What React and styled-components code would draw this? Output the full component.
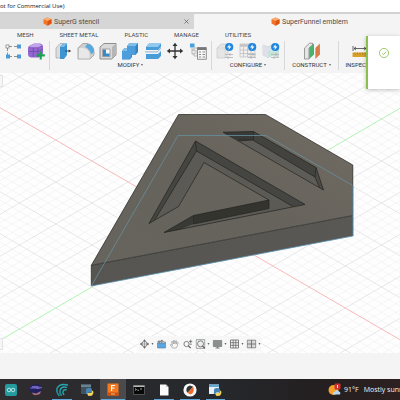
import React from "react";
import styled, { createGlobalStyle } from "styled-components";

const GlobalStyle = createGlobalStyle`
  * { box-sizing: border-box; }
  body { margin: 0; background: #f4f4f5; font-family: Roboto, "Liberation Sans", sans-serif; }
  button { border: 0; padding: 0; margin: 0; background: none; font: inherit; color: inherit; }
`;

const Page = styled.div`
  min-height: 100vh;
  display: flex;
  flex-direction: column;
  overflow: hidden;
  position: relative;
`;

const TitleBar = styled.header`
  height: 12px;
  background: #fff;
  color: #111;
  font: 6px/13px "Open Sans", "Noto Sans", sans-serif;
  white-space: nowrap;
`;

const Tabs = styled.nav`
  display: flex;
  height: 17px;
  background: #f4f4f5;
  border-top: 2px solid #d2d2d2;
`;

const Tab = styled.div`
  flex: 0 0 ${(p) => (p.$active ? "51.5%" : "48.5%")};
  display: flex;
  align-items: center;
  justify-content: space-between;
  padding: 0 4px 0 ${(p) => (p.$active ? "77px" : "43px")};
  background: ${(p) => (p.$active ? "#f4f4f5" : "#d6d6d6")};
`;

const TabButton = styled.button`
  display: flex;
  align-items: center;
  gap: 2px;
  font-size: 7px;
  line-height: 10px;
  color: #4a4a4a;
  white-space: nowrap;
`;

const CloseButton = styled.button`
  display: flex;
`;

const MenuBar = styled.nav`
  display: flex;
  gap: 26px;
  height: 12px;
  padding-left: 17px;
  background: #f4f4f5;
`;

const MenuItem = styled.button`
  font-size: 6px;
  line-height: 12px;
  color: #444;
  white-space: nowrap;
`;

const Ribbon = styled.div`
  display: flex;
  height: 32px;
  padding-bottom: 3px;
  background: #f4f4f5;
  overflow: hidden;
`;

const Group = styled.section`
  flex: 0 0 ${(p) => p.$width}px;
  display: flex;
  flex-direction: column;
  align-items: stretch;
  padding: 0 2px;
  border-right: 1px solid #d8d8d8;
`;

const Tools = styled.div`
  display: flex;
  height: 20px;
`;

const Tool = styled.button`
  flex: 1;
  display: flex;
  align-items: center;
  justify-content: center;
`;

const GroupLabel = styled.button`
  font-size: 6px;
  line-height: 10px;
  color: #333;
  text-align: center;
  white-space: nowrap;
`;

const Caret = styled.span`
  display: inline-block;
  margin-left: ${(p) => p.$gap || 0}px;
  vertical-align: middle;
  border: 1px solid transparent;
  border-top: 2px solid #666;
  border-bottom: 0;
`;

const Viewport = styled.main`
  flex: 1 0 280px;
  position: relative;
  background: #fefefe;
  overflow: hidden;
`;

const Scene = styled.svg`
  position: absolute;
  inset: 0;
  width: 100%;
  height: 100%;
`;

const PanelEdge = styled.div`
  position: absolute;
  left: 0;
  ${(p) => (p.$low ? "bottom: 3px;" : "top: 2px;")}
  width: 3px;
  height: 12px;
  background: #f6f6f6;
  border: 1px solid #e4e4e4;
  border-left: 0;
`;

const NavBar = styled.div`
  position: absolute;
  left: 50%;
  bottom: 2px;
  transform: translateX(-50%);
  display: flex;
  align-items: center;
  gap: 3px;
  height: 15px;
  padding: 0 1px;
  background: #f7f7f7;
`;

const NavButton = styled.button`
  display: flex;
  align-items: center;
  gap: 2px;
`;

const StatusArea = styled.footer`
  height: 26px;
  background: #f4f4f5;
`;

const Taskbar = styled.footer`
  display: flex;
  height: 21px;
  background: linear-gradient(90deg, #302c2f 0%, #2a2a2d 25%, #25282c 55%, #241f20 80%, #2d2020 100%);
  overflow: hidden;
`;

const Apps = styled.div`
  flex: 0 0 230px;
  display: flex;
  margin-left: -2px;
`;

const AppButton = styled.button`
  flex: 1;
  display: flex;
  align-items: center;
  justify-content: center;
  background: ${(p) => (p.$active ? "#4b4a4d" : "transparent")};
  position: relative;

  &::after {
    content: "";
    position: absolute;
    left: ${(p) => (p.$active ? 1 : 3)}px;
    right: ${(p) => (p.$active ? 1 : 3)}px;
    bottom: 0;
    height: 1px;
    background: ${(p) => (p.$running ? "#5fa8dc" : "transparent")};
  }
`;

const Weather = styled.button`
  display: flex;
  align-items: center;
  gap: 3px;
  margin-left: 100px;
  color: #f2f2f2;
  font: 7px/20px "Open Sans", "Noto Sans", sans-serif;
  white-space: nowrap;
`;

const Summary = styled.span`
  margin-left: 2px;
`;

const Toast = styled.aside`
  position: absolute;
  top: 36px;
  right: 0;
  width: 34px;
  height: 53px;
  padding: 8px 0 0 10px;
  background: #fff;
  border-left: 2px solid #8bc051;
  box-shadow: 0 1px 4px rgba(0, 0, 0, 0.25);
`;

/* ---------- icons ---------- */

const Svg = ({ w = 18, h = w, box = `0 0 ${w} ${h}`, children }) => (
  <svg width={w} height={h} viewBox={box} fill="none" aria-hidden="true">{children}</svg>
);

const CubeIcon = () => (
  <Svg w={9}>
    <path d="M4.5 .4 8.5 2.2V6.6L4.5 8.8.5 6.6V2.2Z" fill="#f2742a" />
    <path d="M4.5 .4 8.5 2.2 4.7 3.9.5 2.2Z" fill="#ffab6b" />
    <path d="M4.7 3.9 8.5 2.2V6.6L4.5 8.8Z" fill="#dc5410" />
  </Svg>
);

const PatternIcon = () => (
  <Svg w={18}>
    <path d="M5 4.5H8M10 4.5H13M3.5 6V9M3.5 10.5V13M5 14.5H8M10 14.5H13" stroke="#777" strokeWidth=".8" />
    <rect x="2" y="3" width="3" height="3" fill="#fff" stroke="#777" strokeWidth=".7" />
    <path d="M13 2.5h4v4h-4zM2 12.5h4v4H2zM13 12.5h4v4h-4z" fill="#4b9bd8" />
  </Svg>
);

const FormIcon = () => (
  <Svg w={18}>
    <path d="M1 6Q1 4 4 3L7 1.5H13Q16 2 16 5V11Q15 15 11 15.5H4Q1 15 1 12Z" fill="#9367cf" />
    <path d="M2 5 6 2H13L15 4 11 6H4Z" fill="#c2a2ee" />
    <path d="M1.5 9.5H11L16 7M6.3 6V15M11 6V15.5M2 5.6H11L15.5 4" stroke="#6541a5" strokeWidth=".6" />
    <path d="M13.7 9.2V17.5M9.5 13.4H17.8" stroke="#16a34c" strokeWidth="2.1" />
  </Svg>
);

const PressIcon = () => (
  <Svg w={18}>
    <path d="M2 6 6 1.5H9V16H2Z" fill="#ddd" stroke="#999" strokeWidth=".6" />
    <path d="M6 5 9 1.5H13V13L10 17H6Z" fill="#3d94d1" />
    <path d="M6 5 9 1.5H13L10 5Z" fill="#7bbce8" />
    <path d="M11 9H15" stroke="#333" strokeWidth=".8" />
    <path d="M14.6 7.4 17.2 9 14.6 10.6Z" fill="#333" />
  </Svg>
);

const FilletIcon = () => (
  <Svg w={18}>
    <path d="M1 6 6 1.5H10Q17 3 17 10V13L13 17H1Z" fill="#cfcfcf" stroke="#8c8c8c" strokeWidth=".7" />
    <path d="M2 6H6Q12 7 12.5 12V16.5H1.7Z" fill="#e8e8e8" />
    <path d="M8 5 10.5 1.7Q17 3 17 10L14 12.5Q13 7 8 5Z" fill="#58a9df" />
  </Svg>
);

const ShellIcon = () => (
  <Svg w={18}>
    <path d="M1 5 5 1.5H17V13L13 17H1Z" fill="#dadada" stroke="#777" strokeWidth=".8" />
    <path d="M13 5 17 1.5V13L13 17Z" fill="#b5b5b5" />
    <path d="M3.5 7H11V14.5H3.5Z" fill="#f9f9f9" stroke="#777" strokeWidth=".6" />
    <path d="M4 7.4 7 7.4V11.5H10.6V14.2H4Z" fill="#3889c7" />
  </Svg>
);

const CombineIcon = () => (
  <Svg w={18}>
    <path d="M6 4 8.5 1H17V10L14.5 13H11V15L9 17.5H1V9L3.5 6H6Z" fill="#3184c2" />
    <path d="M6 4 8.5 1H17L14.5 4ZM1 9 3.5 6H6V9Z" fill="#83bee9" />
    <path d="M6 4H14.5V13H10V17H1V9H6Z" fill="#4b9edb" />
  </Svg>
);

const SplitIcon = () => (
  <Svg w={18}>
    <path d="M2 5 5 1.5H17V5L14 8H2ZM2 12H14L17 9V14L14 17H2Z" fill="#489cd8" />
    <path d="M2 5 5 1.5H17L14 5Z" fill="#91c8ed" />
    <path d="M1 10.5H13.5L17.3 6.6" stroke="#d4edff" strokeWidth="1.6" />
    <path d="M1 9.8H13.2L17 6" stroke="#6a8090" strokeWidth=".5" />
  </Svg>
);

const MoveIcon = () => (
  <Svg w={18}>
    <path d="M9 3V15M3 9H15" stroke="#333" strokeWidth="1.3" />
    <path d="M9 .8 11.5 4H6.5ZM9 17.2 6.5 14H11.5ZM.8 9 4 6.5V11.5ZM17.2 9 14 11.5V6.5Z" fill="#333" />
  </Svg>
);

const ParamsIcon = () => (
  <Svg w={18}>
    <path d="M1 1.5h4.5v4H1z" fill="#4b9edb" />
    <path d="M3 6V12H7M3 8H6" stroke="#999" strokeWidth=".7" />
    <path d="M5 6H9V9H5ZM5 11H9V14H5Z" fill="#eee" stroke="#999" strokeWidth=".6" />
    <path d="M8.5 5.5H17.3V17.3H8.5Z" fill="#f5f5f5" stroke="#777" strokeWidth=".8" />
    <path d="M8.5 5.5h8.8V8H8.5z" fill="#777" />
    <path d="M10 10H12M10 12.5H12M10 15H12M13.5 10H16M13.5 12.5H16M13.5 15H16" stroke="#777" strokeWidth=".8" />
  </Svg>
);

const Bolt = () => (
  <g>
    <circle cx="13.2" cy="5" r="4.1" fill="#1f86df" />
    <path d="M13.6 2.2 11 5.5H13L12.4 8 15.5 4.6H13.5Z" fill="#fff" />
  </g>
);

const Sliders = () => (
  <path d="M9 12.5H17M9 15.5H17M14 11V14M12 14V17" stroke="#aeb3b5" strokeWidth=".8" />
);

const ConfigIcon = () => (
  <Svg w={18}>
    <path d="M1 6 5 2H12V12L9 16H1Z" fill="#e5e5e5" stroke="#c4c4c4" strokeWidth=".6" />
    <path d="M1 6H9V16" stroke="#ccc" strokeWidth=".5" />
    <Sliders /><Bolt />
  </Svg>
);

const TableIcon = () => (
  <Svg w={18}>
    <path d="M1 2H16V15H1Z" fill="#f0f0f0" stroke="#bbb" strokeWidth=".7" />
    <path d="M1 3.5H16" stroke="#c2c2c2" strokeWidth="2.5" />
    <path d="M1 8H16M1 11.5H16M4.5 5V15M8.5 5V15M12 5V15" stroke="#b7b7b7" strokeWidth=".7" />
    <Sliders /><Bolt />
  </Svg>
);

const MapIcon = () => (
  <Svg w={18}>
    <path d="M1 3 6 5 12 2 16.5 4V15L11 13 6 15.5 1 13Z" fill="#d2e5ea" stroke="#bcc8cb" strokeWidth=".6" />
    <path d="M1 3 6 5V15.5L1 13Z" fill="#e4ddeb" />
    <path d="M6 8Q9 12 16.5 8V15L11 13 6 15.5Z" fill="#c4e6d9" />
    <Sliders /><Bolt />
  </Svg>
);

const ConstructIcon = () => (
  <Svg w={18}>
    <path d="M1.5 6 6.5 1.2H9.5V3L6 6V17H1.5Z" fill="#e6e6e6" stroke="#666" strokeWidth=".6" />
    <path d="M6.2 6 11 1.5V12.5L6.2 17Z" fill="#47b36d" />
    <path d="M12.4 6 16.9 1.5V12.5L12.4 17Z" fill="#d87b49" />
  </Svg>
);

const MeasureIcon = () => (
  <Svg w={18}>
    <path d="M2 4V9M16 4V9M3 6.5H15M5 5 3 6.5 5 8M13 5 15 6.5 13 8" stroke="#444" strokeWidth=".8" />
    <path d="M1.5 10.5h15v4.5h-15z" fill="#d8a12b" />
    <path d="M4 10.5v2M6.5 10.5v2M9 10.5v2M11.5 10.5v2M14 10.5v2" stroke="#886016" strokeWidth=".5" />
  </Svg>
);

const ribbonGroups = [
  { label: "", width: 50, tools: [["Pattern", PatternIcon], ["Create form", FormIcon]] },
  {
    label: "MODIFY", width: 162,
    tools: [["Press pull", PressIcon], ["Fillet", FilletIcon], ["Shell", ShellIcon], ["Combine", CombineIcon],
      ["Split body", SplitIcon], ["Move", MoveIcon], ["Change parameters", ParamsIcon]],
  },
  { label: "CONFIGURE", width: 73, tools: [["Configure", ConfigIcon], ["Configuration table", TableIcon], ["Theme", MapIcon]] },
  { label: "CONSTRUCT", width: 54, tools: [["Offset plane", ConstructIcon]] },
  { label: "INSPECT", width: 42, tools: [["Measure", MeasureIcon]] },
];

const navTools = [
  ["Orbit", true, <><path d="M5 1V9M1 5H9" stroke="#666" strokeWidth=".5" /><path d="M5 .3 6.5 2.3H3.5ZM5 9.7 3.5 7.7H6.5ZM.3 5 2.3 3.5V6.5ZM9.7 5 7.7 6.5V3.5Z" fill="#666" /><circle cx="5" cy="5" r="2.6" stroke="#666" strokeWidth=".8" /></>],
  ["Look at", false, <><path d="M1 4H9V9H1Z" fill="#5ba6df" stroke="#507da2" strokeWidth=".6" /><path d="M1.5 4V2H5V1L7 2.3 5 3.6V2.8H3V4M7 3H9V4" stroke="#666" fill="#aaa" strokeWidth=".6" /></>],
  ["Pan", false, <path d="M3 9 1 6.2Q.8 5.3 1.7 5.5L3 6.7 2 2.6Q2.3 1.8 3 2.5L4 5 4 1.5Q4.6.6 5 1.5L5.4 4.8 6.3 1.8Q7 1.3 7.1 2.1L6.7 5.2 8 3.5Q9 3.3 8.6 4.2L7.5 7.5 6.6 9Z" fill="#fafafa" stroke="#888" strokeWidth=".6" />],
  ["Zoom", false, <><circle cx="4" cy="5" r="2.6" stroke="#666" strokeWidth=".8" /><path d="M6 7 8.2 9.2" stroke="#555" strokeWidth="1.1" /><path d="M8.2.7V4.2M6.5 2.4H10M7.2 5.2H9.4" stroke="#555" strokeWidth=".7" /></>],
  ["Fit", true, <><path d="M.7.7H9.3V9.3H.7Z" stroke="#777" strokeWidth=".7" /><circle cx="5" cy="4.8" r="3" fill="#e9eef0" stroke="#666" strokeWidth=".8" /><path d="M7 7 9.3 9.3" stroke="#555" strokeWidth="1.1" /></>],
  ["Display settings", true, <><path d="M.7 1.5H9.3V7.5H.7Z" fill="#8c8f90" stroke="#777" strokeWidth=".7" /><path d="M3 9H7M5 7.5V9" stroke="#777" strokeWidth="1" /></>],
  ["Grid and snaps", true, <path d="M1 1H9V9H1ZM3.7 1V9M6.3 1V9M1 3.7H9M1 6.3H9" stroke="#666" strokeWidth=".8" />],
  ["Viewports", true, <><path d="M.7 1.2H9.3V8.8H.7Z" fill="#d5d7d8" stroke="#777" strokeWidth=".8" /><path d="M5 1V9M.7 5H9.3" stroke="#666" strokeWidth=".8" /></>],
];

const PythonFileIcon = ({ light }) => (
  <Svg w={14}>
    <path d="M1 1.5H11V11H1Z" fill={light ? "#e9f1f6" : "#40525c"} />
    <path d="M1 1.5h10V4H1z" fill={light ? "#64a8d1" : "#688391"} />
    <path d="M6 9V7Q6 5 8.5 5H10Q12 5 12 7V8.5Q12 9.5 10 9.5H8V11H6.5Q5.2 11 6 9Z" fill="#4785b9" />
    <path d="M12 7.5Q14 8 13.2 10.5 12.8 13 10 13 7.5 13 7.5 11.5V10H10.5Q12 10 12 7.5Z" fill="#f2d35c" />
  </Svg>
);

const apps = [
  ["Arduino", 0, <Svg w={12}><rect width="12" height="12" rx="2" fill="#249b9e" /><circle cx="4" cy="6" r="1.8" stroke="#d9f3f3" strokeWidth=".8" /><circle cx="8" cy="6" r="1.8" stroke="#d9f3f3" strokeWidth=".8" /></Svg>],
  ["Eclipse", 0, <Svg w={14}><path d="M1 4Q3 1 8 1.2 12 1.5 13 5L12.5 9Q9 13 5.5 12L1 8Z" fill="#20205c" /><path d="M1 4.5Q5 1.5 12.5 4L8 6 1.5 6Z" fill="#5546a8" /><path d="M3 9.5 7 10.5 12 8 11 11Q7 13 4 11.5Z" fill="#a56c80" /><path d="M3 3.8 9 4.2M8 5.6 13 4.6" stroke="#b5b0e9" strokeWidth=".6" /></Svg>],
  ["Waves", 1, <Svg w={14}><path d="M12.5 2Q5 0 2.2 5 .9 9 4 12.5M11.5 4.4Q7 3 5.2 6.8 4.4 10 6.2 12M11 6.8Q8.6 6.4 7.9 8.6 7.8 10.5 8.8 11.5" stroke="#25a9ae" strokeWidth="1.4" strokeLinecap="round" /><path d="M2 5Q1 9 4 12.5M5 7Q4.5 10 6.3 12.3" stroke="#167d91" strokeWidth=".8" /></Svg>],
  ["Python", 0, <PythonFileIcon />],
  ["Fusion", 2, <Svg w={12} h={13}><path d="M.5.5h11v12H.5z" fill="#f47920" /><path d="M.5 9.5h11v3H.5z" fill="#cf500a" /><path d="M4.6 8V2.5H8M4.6 5H7.4" stroke="#fff" strokeWidth="1.2" /><path d="M4 11H8" stroke="#f8c199" strokeWidth=".9" /></Svg>],
  ["Terminal", 0, <Svg w={12} h={10}><path d="M.5.5h11v9H.5z" fill="#080808" stroke="#777" strokeWidth=".6" /><path d="M.5.5h11V2H.5z" fill="#bbb" /><path d="M2 3.5 3.5 4.5 2 5.5M4.5 5.3H6M7 4H9" stroke="#ddd" strokeWidth=".7" /></Svg>],
  ["Document", 1, <Svg w={10} h={12}><path d="M1 .5H7L9.5 3V11.5H1Z" fill="#fafafa" /><path d="M7 .5V3H9.5Z" fill="#bbb" /></Svg>],
  ["Slicer", 1, <Svg w={14}><circle cx="7" cy="7" r="6.6" fill="#f7f7f7" /><path d="M3.4 8Q3 3.5 7 2.6L10.2 3.8 4.6 9.8Z" fill="#303234" /><path d="M4.6 9.8 10.2 3.8Q11.6 7.5 9.4 10.4 7 12.2 4.6 9.8Z" fill="#ee6b29" /></Svg>],
  ["Python viewer", 1, <PythonFileIcon light />],
];

/* ---------- 3D scene ---------- */

const ORIGIN = { x: 200.5, y: 151 };
const STEP = { x: 36.2, y: 21 };

function gridPath(dir, majors) {
  const slope = (STEP.y / STEP.x) * dir;
  let d = "";
  for (let i = -90; i <= 90; i += 1) {
    const isMajor = i % 5 === 0;
    if (isMajor !== majors || i === 0) continue;
    const y = ORIGIN.y + (i * STEP.y * 2) / 5;
    d += `M-600 ${y + slope * (-600 - ORIGIN.x)}L1000 ${y + slope * (1000 - ORIGIN.x)}`;
  }
  return d;
}

const Model = () => (
  <Scene viewBox="0 0 400 280" preserveAspectRatio="xMidYMid slice" role="img" aria-label="Emblem model">
    <defs>
      <linearGradient id="face" x1="0" y1="1" x2="1" y2="0">
        <stop offset="0" stopColor="#66645c" />
        <stop offset=".5" stopColor="#66635c" />
        <stop offset="1" stopColor="#716c63" />
      </linearGradient>
      <linearGradient id="side" x1="0" y1="0" x2="1" y2="0">
        <stop offset="0" stopColor="#565551" />
        <stop offset="1" stopColor="#5a5854" />
      </linearGradient>
    </defs>
    <path d={gridPath(1, false) + gridPath(-1, false)} stroke="#f0f0f2" strokeWidth=".6" />
    <path d={gridPath(1, true) + gridPath(-1, true)} stroke="#d9d9dc" strokeWidth=".6" />
    <path d="M-600 -313.4L1000 614.8" stroke="#f7a6a8" strokeWidth=".8" />
    <path d="M-600 615.4L1000 -312.8" stroke="#a0efa0" strokeWidth=".8" />
    <g transform="translate(0 -73)" strokeLinejoin="round">
      <path d="M178.5 114.5H265.5L352.8 165V215.5L91.3 265.3Z" fill="url(#face)" />
      <path d="M91.3 265.3 352.8 215.5V236L91.3 286Z" fill="url(#side)" />

      <path d="M195.5 141 305 204.5 164 232.5 193.5 215.5 269 200 204 162.5 178.5 206.5 149 223.5Z" fill="#5b5a54" />
      <path d="M195.5 141 149 223.5 155 219.5 196.5 151Z" fill="#454541" />
      <path d="M195.5 141 305 204.5 293 206.5 196.5 151Z" fill="#454541" />
      <path d="M193.5 215.5 269 200V208.5L193.5 224Z" fill="#34342f" />
      <path d="M164 232.5 193.5 215.5V224L180 229.5Z" fill="#393935" />

      <path d="M223 132.2 253.5 131.5 316 167.5 323.5 190Z" fill="#5e5c56" />
      <path d="M223 132.2 253.5 131.5V140L240.5 141.5Z" fill="#393a37" />
      <path d="M253.5 131.5 316 167.5 315 177 253.5 140.5Z" fill="#42433f" />
      <path d="M316 167.5 323.5 190 319.5 187.5 315 177Z" fill="#4b4a45" />

      <g stroke="#22221f" strokeWidth=".7" fill="none">
        <path d="M178.5 114.5H265.5L352.8 165V236M178.5 114.5 91.3 265.3V286M91.3 265.3 352.8 215.5" />
        <path d="M195.5 141 305 204.5 164 232.5 193.5 215.5 269 200 204 162.5 178.5 206.5 149 223.5ZM195.5 141 196.5 151 293 206.5M196.5 151 155 219.5M193.5 215.5V224L269 208.5V200" />
        <path d="M223 132.2 253.5 131.5 316 167.5 323.5 190ZM253.5 131.5V140.5L315 177 319.5 187.5M253.5 140H238M316 167.5 315 177" />
      </g>
      <path d="M91.3 286 178 135.5H266L352.8 185.5" stroke="#668f9e" strokeWidth=".8" fill="none" />
      <path d="M91.3 286 352.8 236V186" stroke="#568eae" strokeWidth=".8" fill="none" />
    </g>
  </Scene>
);

export default function App() {
  return (
    <Page>
      <GlobalStyle />
      <TitleBar>ot for Commercial Use)</TitleBar>
      <Tabs aria-label="Documents">
        <Tab>
          <TabButton><CubeIcon />SuperG stencil</TabButton>
          <CloseButton aria-label="Close tab">
            <Svg w={7}><path d="M1.5 1.5 5.5 5.5M5.5 1.5 1.5 5.5" stroke="#666" strokeWidth=".8" /></Svg>
          </CloseButton>
        </Tab>
        <Tab $active>
          <TabButton><CubeIcon />SuperFunnel emblem</TabButton>
        </Tab>
      </Tabs>
      <MenuBar>
        {["MESH", "SHEET METAL", "PLASTIC", "MANAGE", "UTILITIES"].map((name) => (
          <MenuItem key={name}>{name}</MenuItem>
        ))}
      </MenuBar>
      <Ribbon>
        {ribbonGroups.map((group) => (
          <Group key={group.width} $width={group.width}>
            <Tools>
              {group.tools.map(([name, Icon]) => (
                <Tool key={name} aria-label={name}><Icon /></Tool>
              ))}
            </Tools>
            {group.label && <GroupLabel>{group.label}<Caret $gap={2} /></GroupLabel>}
          </Group>
        ))}
      </Ribbon>
      <Viewport>
        <Model />
        <PanelEdge />
        <PanelEdge $low />
        <NavBar>
          {navTools.map(([name, menu, drawing]) => (
            <NavButton key={name} aria-label={name}>
              <Svg w={10}>{drawing}</Svg>
              {menu && <Caret />}
            </NavButton>
          ))}
        </NavBar>
      </Viewport>
      <StatusArea />
      <Taskbar>
        <Apps>
          {apps.map(([name, state, icon]) => (
            <AppButton key={name} aria-label={name} $running={state > 0} $active={state === 2}>{icon}</AppButton>
          ))}
        </Apps>
        <Weather>
          <Svg w={13}>
            <circle cx="5.5" cy="7" r="5" fill="#f3a02f" />
            <path d="M5 11.5Q4 9 7 8.5 9 6 11 8.5 13 9 12 11.5Z" fill="#b9d6f3" />
            <rect x="6.5" y=".5" width="6" height="6" rx="1" fill="#cf302e" />
            <path d="M9.5 2V5" stroke="#fff" strokeWidth=".9" />
          </Svg>
          <span>91°F</span>
          <Summary>Mostly sunny</Summary>
        </Weather>
      </Taskbar>
      <Toast role="status" aria-label="Done">
        <Svg w={12}>
          <circle cx="6" cy="6" r="4.6" stroke="#8bc051" strokeWidth=".8" />
          <path d="M3.8 6.2 5.4 7.7 8.3 4.6" stroke="#8bc051" strokeWidth=".8" />
        </Svg>
      </Toast>
    </Page>
  );
}
